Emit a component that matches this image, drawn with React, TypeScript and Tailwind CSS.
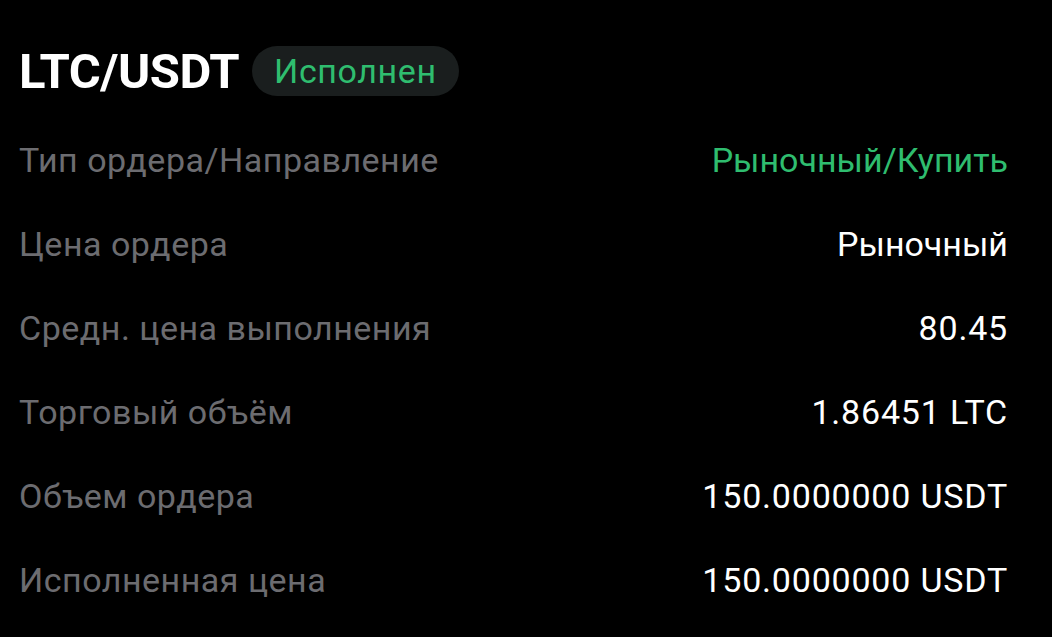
const rows: { label: string; value: string; green?: boolean; num?: boolean }[] = [
  { label: "Тип ордера/Направление", value: "Рыночный/Купить", green: true },
  { label: "Цена ордера", value: "Рыночный" },
  { label: "Средн. цена выполнения", value: "80.45", num: true },
  { label: "Торговый объём", value: "1.86451 LTC", num: true },
  { label: "Объем ордера", value: "150.0000000 USDT", num: true },
  { label: "Исполненная цена", value: "150.0000000 USDT", num: true },
];

export default function App() {
  return (
    <div
      className="w-[1052px] h-[637px] bg-black overflow-hidden pl-[19px] pr-[44px] pt-[45px]"
      style={{ fontFamily: "Roboto, 'Noto Sans', sans-serif" }}
    >
      {/* Header */}
      <div className="flex items-center gap-[13px] h-[52px]">
        <h1 className="text-white text-[49px] font-bold tracking-[-0.5px] leading-none">LTC/USDT</h1>
        <span className="h-[50px] px-[22px] rounded-full bg-[#1a1e1e] text-[#2fbd6f] text-[34px] tracking-[0.6px] leading-[50px]">
          Исполнен
        </span>
      </div>

      {/* Details */}
      <div className="mt-[21px] flex flex-col">
        {rows.map((r) => (
          <div key={r.label} className="flex items-center justify-between h-[84px] text-[34px]">
            <span className="text-[#6c6c70] tracking-[0.5px]">{r.label}</span>
            <span
              className={`${r.green ? "text-[#2fbd6f]" : "text-white"} ${r.num ? "tracking-[0.8px]" : ""}`}
            >
              {r.value}
            </span>
          </div>
        ))}
      </div>
    </div>
  );
}
